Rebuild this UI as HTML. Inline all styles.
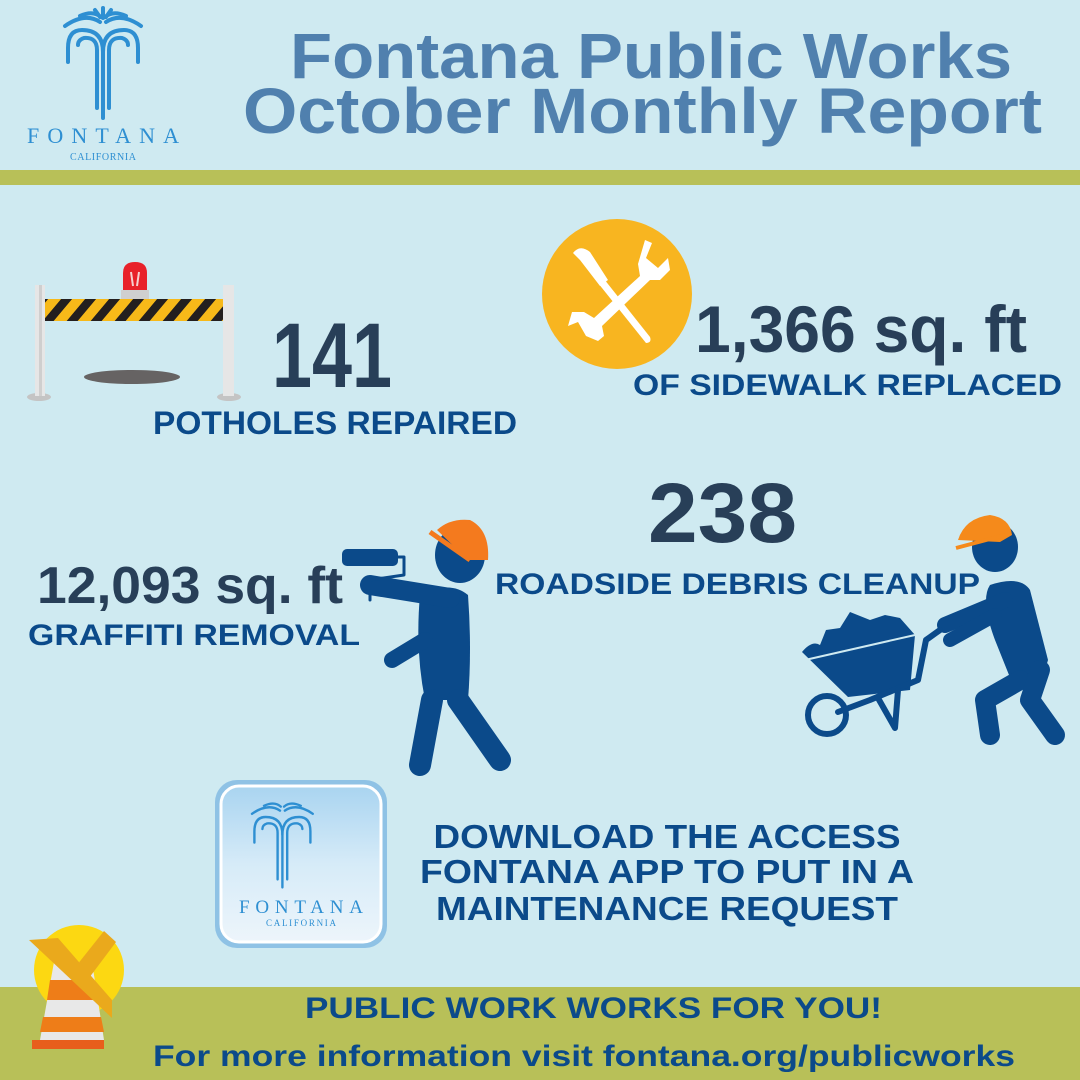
<!DOCTYPE html>
<html><head><meta charset="utf-8"><style>
html,body{margin:0;padding:0;background:#cfeaf1}
svg{display:block}
text{font-family:"Liberation Sans",sans-serif;font-weight:bold}
</style></head><body>
<svg width="1080" height="1080" viewBox="0 0 1080 1080" xmlns="http://www.w3.org/2000/svg">
<rect width="1080" height="1080" fill="#cfeaf1"/>
<rect y="170" width="1080" height="15" fill="#b8c058"/>
<rect y="987" width="1080" height="93" fill="#b8c058"/>

<!-- logo -->
<g fill="none" stroke="#2e8fd2" stroke-width="4" stroke-linecap="round">
<path d="M103 118 V52 Q103 30 82 30 Q68 30 68 48 V62"/>
<path d="M103 52 Q103 30 124 30 Q138 30 138 48 V62"/>
<path d="M97 108 V50 Q97 37 84 38 Q78 40 78 45"/>
<path d="M109 108 V50 Q109 37 122 38 Q128 40 128 45"/>
<path d="M65 26 Q85 12 100 22"/><path d="M141 26 Q121 12 106 22"/>
<path d="M80 16 Q93 10 101 17"/><path d="M126 16 Q113 10 105 17"/>
<path d="M103 8 V18"/><path d="M95 10 L100 17"/><path d="M111 10 L106 17"/>
</g>
<text x="103" y="143" text-anchor="middle" font-size="22" fill="#2e8fd2" textLength="152" style="font-family:'Liberation Serif',serif;font-weight:normal">FONTANA</text>
<text x="103" y="160" text-anchor="middle" font-size="10" fill="#2e8fd2" textLength="66" style="font-family:'Liberation Serif',serif;font-weight:normal">CALIFORNIA</text>

<g lengthAdjust="spacingAndGlyphs">
<text x="290" y="78" font-size="64" fill="#5080ae" textLength="722" lengthAdjust="spacingAndGlyphs">Fontana Public Works</text>
<text x="243" y="133" font-size="64" fill="#5080ae" textLength="799" lengthAdjust="spacingAndGlyphs">October Monthly Report</text>
</g>

<!-- barrier -->
<ellipse cx="39" cy="397" rx="12" ry="4" fill="#c4c4c4"/>
<ellipse cx="229" cy="397" rx="12" ry="4" fill="#c4c4c4"/>
<rect x="35" y="285" width="10" height="111" fill="#e6e6e6"/>
<rect x="223" y="285" width="11" height="111" fill="#e6e6e6"/>
<rect x="39" y="285" width="3" height="111" fill="#cfcfcf"/>
<defs><pattern id="st" width="24" height="22" patternUnits="userSpaceOnUse" patternTransform="skewX(-40)"><rect width="24" height="22" fill="#f7b919"/><rect width="11" height="22" fill="#231f1f"/></pattern></defs>
<rect x="45" y="299" width="178" height="22" fill="url(#st)"/>
<rect x="121" y="290" width="28" height="9" fill="#cfcfcf"/>
<path d="M123 290 V273 Q123 262 135 262 Q147 262 147 273 V290 Z" fill="#e8212a"/>
<path d="M131 272 L133 286 M139 272 L137 286" stroke="#f5d0d0" stroke-width="2"/>
<ellipse cx="132" cy="377" rx="48" ry="7" fill="#666363"/>
<text x="272" y="387" font-size="92" fill="#283f58" textLength="120" lengthAdjust="spacingAndGlyphs">141</text>
<text x="153" y="434" font-size="32" fill="#0b4a8a" textLength="364" lengthAdjust="spacingAndGlyphs">POTHOLES REPAIRED</text>

<!-- tools -->
<circle cx="617" cy="294" r="75" fill="#f8b520"/>
<g fill="#fff">
<path d="M573 253 Q580 244 590 252 L608 280 L600 286 L580 260 Z"/>
<path d="M598 283 L604 279 L650 337 Q652 343 646 343 Z"/>
<path d="M645 240 L652 243 L646 258 L658 268 L668 258 L670 270 L660 280 L650 280 L602 326 L604 336 L598 341 L586 336 L578 322 L568 326 L572 312 L584 312 L594 318 L640 276 L638 264 Z"/>
</g>
<text x="695" y="352" font-size="66" fill="#283f58" textLength="332" lengthAdjust="spacingAndGlyphs">1,366 sq. ft</text>
<text x="633" y="395" font-size="30" fill="#0b4a8a" textLength="429" lengthAdjust="spacingAndGlyphs">OF SIDEWALK REPLACED</text>

<text x="648" y="542" font-size="84" fill="#283f58" textLength="149" lengthAdjust="spacingAndGlyphs">238</text>
<text x="495" y="594" font-size="30" fill="#0b4a8a" textLength="485" lengthAdjust="spacingAndGlyphs">ROADSIDE DEBRIS CLEANUP</text>
<text x="37" y="603" font-size="52" fill="#283f58" textLength="306" lengthAdjust="spacingAndGlyphs">12,093 sq. ft</text>
<text x="28" y="645" font-size="30" fill="#0b4a8a" textLength="332" lengthAdjust="spacingAndGlyphs">GRAFFITI REMOVAL</text>

<!-- painter -->
<g fill="#0b4a8a" stroke="#0b4a8a" stroke-linecap="round" stroke-linejoin="round">
<ellipse cx="460" cy="555" rx="25" ry="28" stroke="none"/>
<path d="M420 595 Q450 580 468 595 Q472 650 468 700 L425 700 Q415 650 420 595Z" stroke="none"/>
<path d="M450 598 L370 585" stroke-width="20" fill="none"/>
<path d="M425 640 L392 660" stroke-width="16" fill="none"/>
<path d="M432 700 L420 765" stroke-width="22" fill="none"/>
<path d="M458 700 L500 760" stroke-width="22" fill="none"/>
<rect x="342" y="549" width="56" height="17" rx="5" stroke="none"/>
<path d="M398 557 H404 V575 L370 580 V600" stroke-width="3" fill="none"/>
</g>
<path d="M437 530 Q450 518 470 520 Q490 530 488 560 L468 560 Z" fill="#f47a1e"/>
<path d="M430 532 L470 560" stroke="#f47a1e" stroke-width="5"/>

<!-- wheelbarrow man -->
<g fill="#0b4a8a" stroke="#0b4a8a" stroke-linecap="round" stroke-linejoin="round">
<ellipse cx="995" cy="547" rx="23" ry="25" stroke="none"/>
<path d="M990 585 Q1020 575 1030 590 L1048 660 Q1040 690 1015 690 L995 640 Q980 600 990 585Z" stroke="none"/>
<path d="M1005 600 L945 625" stroke-width="16" fill="none"/>
<path d="M995 615 L950 640" stroke-width="14" fill="none"/>
<path d="M1020 680 L985 700 L990 735" stroke-width="20" fill="none"/>
<path d="M1040 670 L1030 700 L1055 735" stroke-width="20" fill="none"/>
<path d="M802 652 Q812 640 820 645 L826 630 L840 628 L850 612 L870 620 L885 615 L900 618 L915 635 L910 690 L848 697 Z" stroke="none"/>
<path d="M940 630 L926 640 L918 680 L870 700 L838 712" stroke-width="6" fill="none"/>
<path d="M878 698 L895 728 L898 690" stroke-width="6" fill="none"/>
<circle cx="827" cy="715" r="19" fill="none" stroke-width="6"/>
</g>
<path d="M805 660 L915 635" stroke="#cfeaf1" stroke-width="2"/>
<path d="M958 540 Q965 518 990 515 Q1010 518 1012 535 L1000 542 Z" fill="#f58a1b"/>
<path d="M956 548 L1005 535" stroke="#f58a1b" stroke-width="4"/>

<!-- app icon -->
<defs><linearGradient id="ag" x1="0" y1="0" x2="0" y2="1"><stop offset="0" stop-color="#a9d4f0"/><stop offset="0.5" stop-color="#d6ebf8"/><stop offset="1" stop-color="#edf5fb"/></linearGradient></defs>
<rect x="215" y="780" width="172" height="168" rx="22" fill="#8fc2e5"/>
<rect x="221" y="786" width="160" height="156" rx="18" fill="url(#ag)" stroke="#fff" stroke-width="3"/>
<g fill="none" stroke="#2e8fd2" stroke-width="3" stroke-linecap="round" transform="translate(200 793) scale(0.8)">
<path d="M103 118 V52 Q103 30 82 30 Q68 30 68 48 V62"/>
<path d="M103 52 Q103 30 124 30 Q138 30 138 48 V62"/>
<path d="M97 108 V50 Q97 37 84 38 Q78 40 78 45"/>
<path d="M109 108 V50 Q109 37 122 38 Q128 40 128 45"/>
<path d="M65 26 Q85 12 100 22"/><path d="M141 26 Q121 12 106 22"/>
<path d="M80 16 Q93 10 101 17"/><path d="M126 16 Q113 10 105 17"/>
</g>
<text x="301" y="913" text-anchor="middle" font-size="19" fill="#2e8fd2" textLength="124" style="font-family:'Liberation Serif',serif;font-weight:normal">FONTANA</text>
<text x="301" y="926" text-anchor="middle" font-size="9" fill="#2e8fd2" textLength="70" style="font-family:'Liberation Serif',serif;font-weight:normal">CALIFORNIA</text>

<g font-size="33" fill="#0b4a8a" text-anchor="middle">
<text x="667" y="848" textLength="467" lengthAdjust="spacingAndGlyphs">DOWNLOAD THE ACCESS</text>
<text x="667" y="883" textLength="494" lengthAdjust="spacingAndGlyphs">FONTANA APP TO PUT IN A</text>
<text x="667" y="920" textLength="462" lengthAdjust="spacingAndGlyphs">MAINTENANCE REQUEST</text>
</g>

<!-- cone & sun -->
<circle cx="79" cy="970" r="45" fill="#fcd812"/>
<path d="M54 962 L92 962 L104 1040 L40 1040 Z" fill="#e8e8e8"/>
<path d="M50 980 L94 980 L97 1000 L47 1000 Z" fill="#ee7d18"/>
<path d="M43 1017 L101 1017 L104 1032 L40 1032 Z" fill="#ee7d18"/>
<rect x="32" y="1040" width="72" height="9" fill="#e85e1c"/>
<path d="M29 940 L58 938 L112 1000 L112 1018 Z" fill="#eaa91c"/>
<path d="M73 970 L104 931 L116 942 L86 982 Z" fill="#eaa91c"/>

<text x="305" y="1018" font-size="30" fill="#0b4a8a" textLength="577" lengthAdjust="spacingAndGlyphs">PUBLIC WORK WORKS FOR YOU!</text>
<text x="153" y="1066" font-size="30" fill="#0b4a8a" textLength="862" lengthAdjust="spacingAndGlyphs">For more information visit fontana.org/publicworks</text>
</svg>
</body></html>
